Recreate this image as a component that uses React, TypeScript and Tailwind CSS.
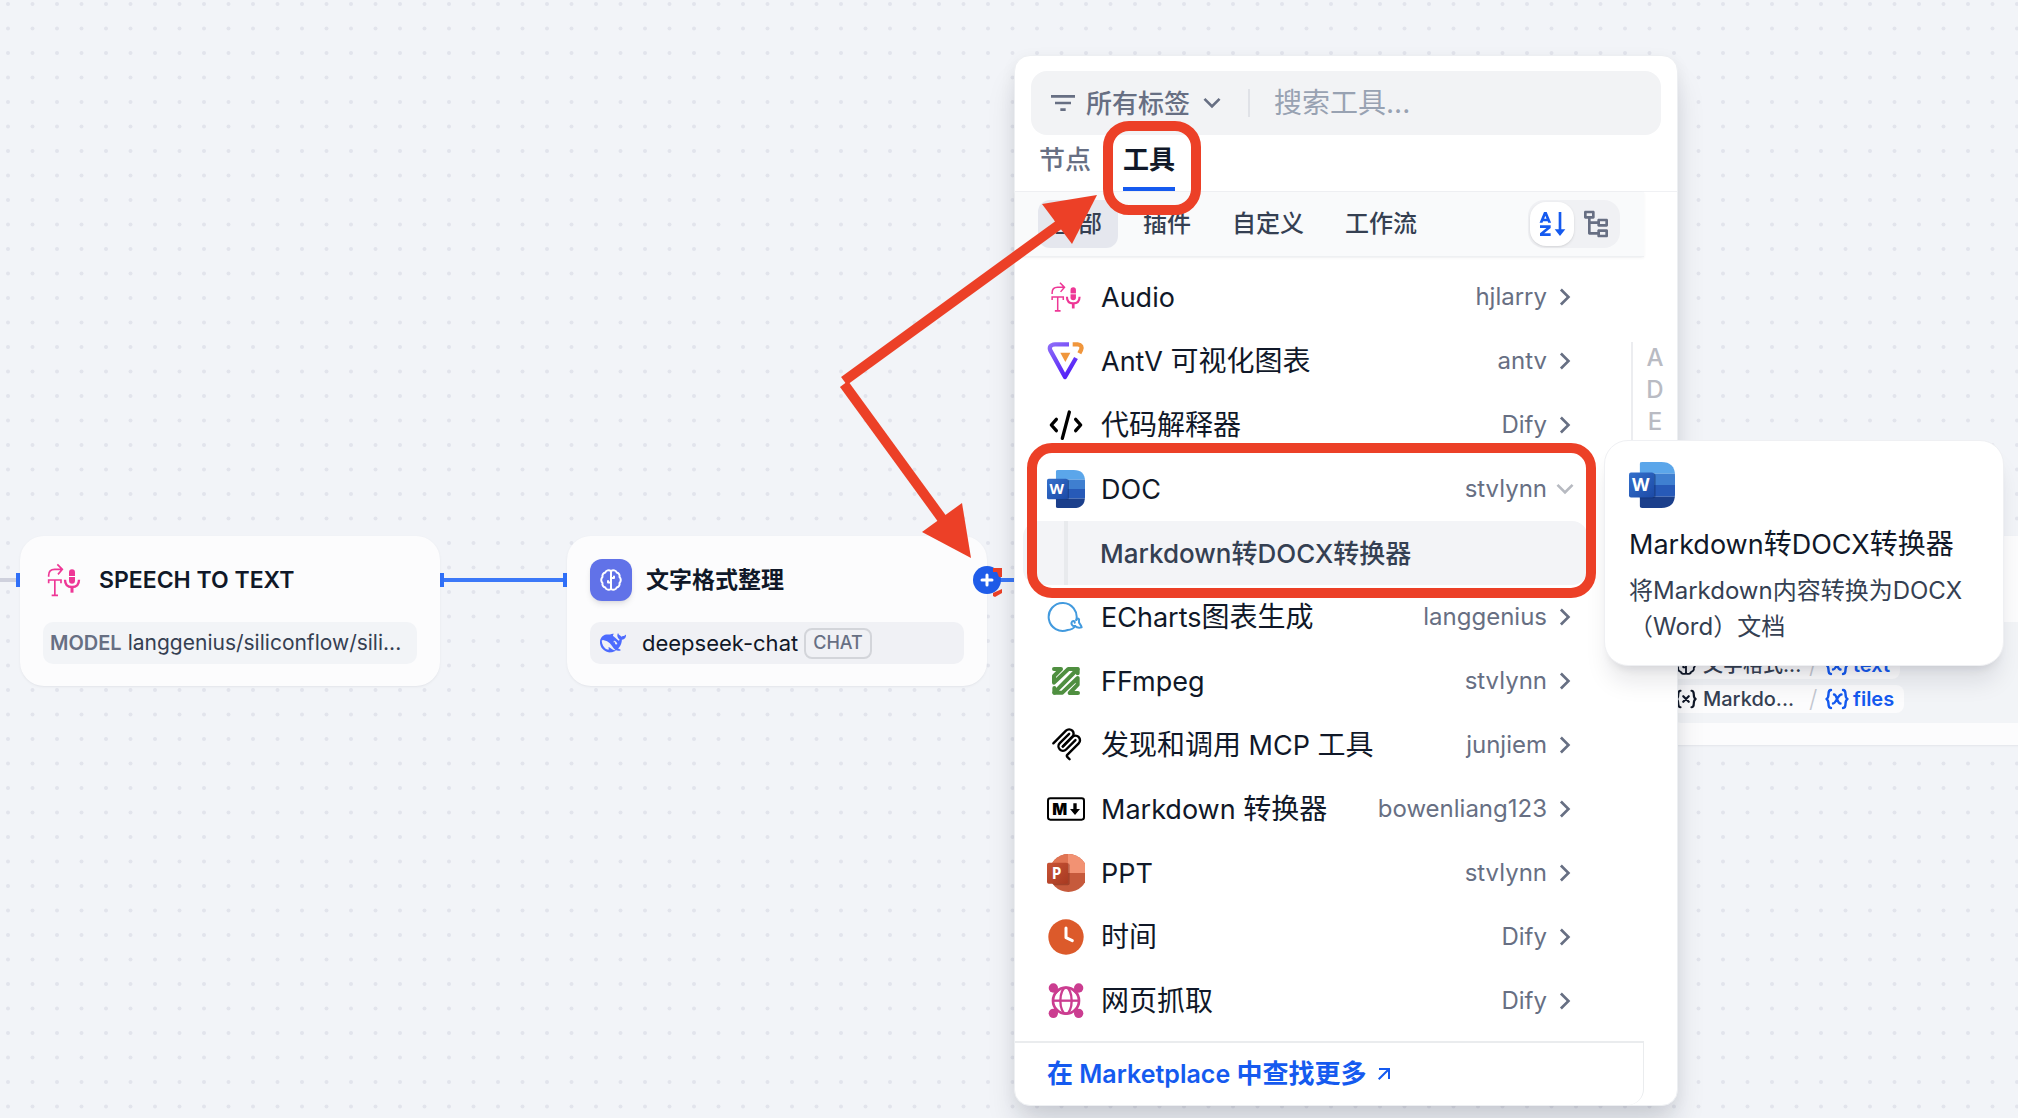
import type { ReactNode } from "react";
import {
  RiArrowDownSLine,
  RiArrowRightSLine,
  RiArrowRightUpLine,
  RiFilter3Line,
  RiNodeTree,
  RiSortAlphabetAsc,
} from "react-icons/ri";

/** Latin runs are set a little smaller than the Chinese text they sit in. */
function Mixed({ text, latin }: { text: string; latin: string }) {
  return (
    <>
      {text.split(/([\x20-\x7e]+)/).map((run, i) =>
        i % 2 ? (
          <span key={i} className={latin}>
            {run}
          </span>
        ) : (
          run
        ),
      )}
    </>
  );
}

function AudioIcon({ className }: { className: string }) {
  return (
    <svg viewBox="0 0 126 126" className={className} fill="none" stroke="#ee3796" strokeWidth="5" aria-hidden="true">
      <path d="M17 53V49C17 38 24 31 35 31H57M43 16L58 31L45 46" />
      <path d="M17 73V63H54V73M35.5 63V109M26 109H45" />
      <rect x="78" y="31" width="18" height="43" rx="9" fill="#ee3796" stroke="none" />
      <path d="M76 52.5H98" stroke="#fff" strokeWidth="3" />
      <path d="M66 62C66 78 74 84 87 84C100 84 108 78 108 62" strokeWidth="7" />
      <path d="M87 84V101" strokeWidth="9" />
    </svg>
  );
}

function AntvIcon() {
  return (
    <svg viewBox="0 0 114 114" className="size-full" fill="none" strokeLinejoin="round" aria-hidden="true">
      <defs>
        <linearGradient id="antv-purple" x1="0" y1="0" x2="0.6" y2="1">
          <stop offset="0" stopColor="#8d6bf8" />
          <stop offset="1" stopColor="#5522f7" />
        </linearGradient>
      </defs>
      <path d="M66 7H24C10 8 6 16 10 25L54 105L87 48" stroke="url(#antv-purple)" strokeWidth="13" />
      <path d="M77 7H92C103 8 106 15 102 24L97 34" stroke="#f0963c" strokeWidth="13" />
      <path d="M40 32H70L55 60Z" fill="#f0963c" />
    </svg>
  );
}

function CodeIcon() {
  return (
    <svg viewBox="0 0 114 114" className="size-full" fill="none" stroke="#000" strokeWidth="10" strokeLinecap="round" strokeLinejoin="round" aria-hidden="true">
      <path d="M28 40L13 57L28 74M86 40L101 57L86 74M67 18L46 97" />
    </svg>
  );
}

function WordIcon() {
  return (
    <svg viewBox="0 0 114 114" className="size-full" aria-hidden="true">
      <defs>
        <clipPath id="word-page">
          <path d="M32 0H80Q114 0 114 34V80Q114 114 80 114H32Q26 114 26 108V6Q26 0 32 0Z" />
        </clipPath>
        <linearGradient id="word-tile" x1="0" y1="0" x2="1" y2="1">
          <stop offset="0" stopColor="#3470cc" />
          <stop offset="1" stopColor="#1c4aa6" />
        </linearGradient>
      </defs>
      <g clipPath="url(#word-page)">
        <rect x="26" width="88" height="29" fill="#5ba6ea" />
        <rect x="26" y="29" width="88" height="28" fill="#3f7fd0" />
        <rect x="26" y="57" width="88" height="29" fill="#275ab8" />
        <rect x="26" y="86" width="88" height="28" fill="#1b3f8b" />
        <rect x="20" y="28" width="46" height="62" rx="6" fill="#0b2a66" fillOpacity="0.45" />
      </g>
      <rect y="26" width="62" height="62" rx="5" fill="url(#word-tile)" />
      <text x="29" y="73" textAnchor="middle" fontFamily="Open Sans" fontWeight="700" fontSize="45" fill="#fff">W</text>
    </svg>
  );
}

function EchartsIcon() {
  return (
    <svg viewBox="0 0 114 114" className="size-full" fill="none" stroke="#429ade" strokeWidth="6" strokeLinecap="round" strokeLinejoin="round" aria-hidden="true">
      <path d="M88 66A42 42 0 1 0 62 96C72 96 82 90 84 84C76 86 70 76 76 70C80 67 84 70 83 74" />
      <path d="M88 66C92 58 98 62 96 68C94 76 101 78 104 88C97 90 90 90 84 84" />
    </svg>
  );
}

function FfmpegIcon() {
  return (
    <svg viewBox="0 0 114 114" className="size-full" fill="none" stroke="#4f8f40" strokeWidth="12" strokeLinejoin="round" strokeLinecap="round" aria-hidden="true">
      <path d="M21 21H42L21 42V62L64 21H92L22 92H46L92 48V68L68 93H93" />
      <path d="M92 22V34M22 78V92" />
    </svg>
  );
}

function McpIcon() {
  return (
    <svg viewBox="-16 -8 204 204" className="size-full" fill="none" stroke="#000" strokeWidth="13" strokeLinecap="round" aria-hidden="true">
      <path d="M18 84.8528L85.8822 16.9706C95.2548 7.59798 110.451 7.59798 119.823 16.9706C129.196 26.3431 129.196 41.5391 119.823 50.9117L68.5581 102.177" />
      <path d="M69.2652 101.47L119.823 50.9117C129.196 41.5391 144.392 41.5391 153.765 50.9117L154.118 51.2652C163.491 60.6378 163.491 75.8338 154.118 85.2063L92.7248 146.6C89.6006 149.724 89.6006 154.789 92.7248 157.913L105.331 170.52" />
      <path d="M102.853 33.9411L52.6482 84.1457C43.2756 93.5183 43.2756 108.714 52.6482 118.087C62.0208 127.459 77.2167 127.459 86.5893 118.087L136.794 67.8822" />
    </svg>
  );
}

function MarkdownIcon() {
  return (
    <svg viewBox="0 0 114 114" className="size-full" aria-hidden="true">
      <rect x="3" y="25" width="108" height="64" rx="7" fill="none" stroke="#000" strokeWidth="6" />
      <text x="38" y="74" textAnchor="middle" fontFamily="Inter" fontWeight="900" fontSize="47" fill="#000">M</text>
      <path d="M79 40H89V57H99L84 75L69 57H79Z" />
    </svg>
  );
}

function PptIcon() {
  return (
    <svg viewBox="0 0 114 114" className="size-full" aria-hidden="true">
      <defs>
        <clipPath id="ppt-disc">
          <circle cx="64" cy="57" r="57" />
        </clipPath>
        <linearGradient id="ppt-tile" x1="0" y1="0" x2="1" y2="1">
          <stop offset="0" stopColor="#c85336" />
          <stop offset="1" stopColor="#a83a21" />
        </linearGradient>
      </defs>
      <g clipPath="url(#ppt-disc)">
        <rect width="114" height="114" fill="#c65a3c" />
        <rect width="63" height="57" fill="#e07453" />
        <rect x="63" width="51" height="57" fill="#f29273" />
        <rect x="4" y="28" width="64" height="66" rx="6" fill="#6b1f0e" fillOpacity="0.4" />
      </g>
      <rect y="26" width="63" height="63" rx="5" fill="url(#ppt-tile)" />
      <text x="29" y="74" textAnchor="middle" fontFamily="Open Sans" fontWeight="700" fontSize="46" fill="#fff">P</text>
    </svg>
  );
}

function ClockIcon() {
  return (
    <svg viewBox="0 0 114 114" className="size-full" fill="none" aria-hidden="true">
      <circle cx="57" cy="57" r="53" fill="#dc5a2b" />
      <path d="M57 30V59L76 68" stroke="#fff" strokeWidth="9" strokeLinecap="round" strokeLinejoin="round" />
    </svg>
  );
}

function WebIcon() {
  return (
    <svg viewBox="0 0 114 114" className="size-full" fill="none" stroke="#cb3d90" strokeWidth="8" aria-hidden="true">
      <circle cx="57" cy="56" r="39" />
      <ellipse cx="57" cy="56" rx="17" ry="39" strokeWidth="7" />
      <path d="M18 56H96" strokeWidth="7" />
      <path d="M20 19L32 31M94 19L82 31M20 93L32 81M94 93L82 81" strokeWidth="14" />
      <g fill="#cb3d90" stroke="none">
        <circle cx="19" cy="18" r="14" />
        <circle cx="95" cy="18" r="14" />
        <circle cx="19" cy="94" r="14" />
        <circle cx="95" cy="94" r="14" />
      </g>
    </svg>
  );
}

function BrainIcon({ className }: { className: string }) {
  return (
    <svg viewBox="0 0 24 24" className={className} fill="none" stroke="currentColor" strokeWidth="2" strokeLinecap="round" strokeLinejoin="round" aria-hidden="true">
      <path d="M12 3C10 1.6 7 2.2 6.3 4.5C4 5 3 7 3.5 9C1.8 10.5 1.8 13.5 3.5 15C3 17 4 19 6.3 19.5C7 21.8 10 22.4 12 21" />
      <path d="M12 3C14 1.6 17 2.2 17.7 4.5C20 5 21 7 20.5 9C22.2 10.5 22.2 13.5 20.5 15C21 17 20 19 17.7 19.5C17 21.8 14 22.4 12 21" />
      <path d="M12 3V21M12 14.5H9V13M12 10H15V8.5" />
    </svg>
  );
}

function DeepseekIcon() {
  return (
    <svg viewBox="0 0 24 24" className="h-7 w-[26px]" fill="#4d6bfe" aria-hidden="true">
      <path d="M23.748 4.482c-.254-.124-.364.113-.512.234-.051.039-.094.09-.137.136-.372.397-.806.657-1.373.626-.829-.046-1.537.214-2.163.848-.133-.782-.575-1.248-1.247-1.548-.352-.156-.708-.311-.955-.65-.172-.241-.219-.51-.305-.774-.055-.16-.11-.323-.293-.35-.2-.031-.278.136-.356.276-.313.572-.434 1.202-.422 1.84.027 1.436.633 2.58 1.838 3.393.137.093.172.187.129.323-.082.28-.18.552-.266.833-.055.179-.137.217-.329.14a5.526 5.526 0 01-1.736-1.18c-.857-.828-1.631-1.742-2.597-2.458a11.365 11.365 0 00-.689-.471c-.985-.957.13-1.743.388-1.836.27-.098.093-.432-.779-.428-.872.004-1.67.295-2.687.684a3.055 3.055 0 01-.465.137 9.597 9.597 0 00-2.883-.102c-1.885.21-3.39 1.102-4.497 2.623C.082 8.606-.231 10.684.152 12.85c.403 2.284 1.569 4.175 3.36 5.653 1.858 1.533 3.997 2.284 6.438 2.14 1.482-.085 3.133-.284 4.994-1.86.47.234.962.327 1.78.397.63.059 1.236-.03 1.705-.128.735-.156.684-.837.419-.961-2.155-1.004-1.682-.595-2.113-.926 1.096-1.296 2.746-2.642 3.392-7.003.05-.347.007-.565 0-.845-.004-.17.035-.237.23-.256a4.173 4.173 0 001.545-.475c1.396-.763 1.96-2.015 2.093-3.517.02-.23-.004-.467-.247-.588zM11.581 18c-2.089-1.642-3.102-2.183-3.52-2.16-.392.024-.321.471-.235.763.09.288.207.486.371.739.114.167.192.416-.113.603-.673.416-1.842-.14-1.897-.167-1.361-.802-2.5-1.86-3.301-3.307-.774-1.393-1.224-2.887-1.298-4.482-.02-.386.093-.522.477-.592a4.696 4.696 0 011.529-.039c2.132.312 3.946 1.265 5.468 2.774.868.86 1.525 1.887 2.202 2.891.72 1.066 1.494 2.082 2.48 2.914.348.292.625.514.891.677-.802.09-2.14.11-3.054-.614zm1-6.44a.306.306 0 01.415-.287.302.302 0 01.2.288.306.306 0 01-.31.307.303.303 0 01-.304-.308zm3.11 1.596c-.2.081-.399.151-.59.16a1.245 1.245 0 01-.798-.254c-.274-.23-.47-.358-.552-.758a1.73 1.73 0 01.016-.588c.07-.327-.008-.537-.239-.727-.187-.156-.426-.199-.688-.199a.559.559 0 01-.254-.078c-.11-.054-.2-.19-.114-.358.028-.054.16-.186.192-.21.356-.202.767-.136 1.146.016.352.144.618.408 1.001.782.391.451.462.576.685.914.176.265.336.537.445.848.067.195-.019.354-.25.452z" />
    </svg>
  );
}

function VariableIcon({ className, italic }: { className: string; italic?: boolean }) {
  return (
    <svg viewBox="0 0 24 24" className={className} fill="none" stroke="currentColor" strokeWidth="2.4" strokeLinecap="round" strokeLinejoin="round" aria-hidden="true">
      <path d="M6 3C3.5 3 3.5 5 3.5 7C3.5 9.5 3.2 11 1.5 12C3.2 13 3.5 14.5 3.5 17C3.5 19 3.5 21 6 21" />
      <path d="M18 3C20.5 3 20.5 5 20.5 7C20.5 9.5 20.8 11 22.5 12C20.8 13 20.5 14.5 20.5 17C20.5 19 20.5 21 18 21" />
      <path d={italic ? "M8 16.5C11 16.5 13 7.5 16.5 7.5M9 7.5C12 7.5 12 16.5 15.5 16.5" : "M9 9L15 15M15 9L9 15"} />
    </svg>
  );
}

/** Dot grid and the edges that join the nodes. */
function CanvasBackdrop() {
  return (
    <svg className="absolute inset-0 size-full" aria-hidden="true">
      <defs>
        <pattern id="dots" width="49" height="49" patternUnits="userSpaceOnUse">
          <g fill="#e2e4ec">
            <circle cx="8" cy="4" r="2" />
            <circle cx="32.5" cy="4" r="2" />
            <circle cx="8" cy="28.5" r="2" />
            <circle cx="32.5" cy="28.5" r="2" />
          </g>
        </pattern>
      </defs>
      <rect width="100%" height="100%" fill="url(#dots)" />
      <path d="M0 580H17" stroke="#cfd1dd" strokeWidth="4" />
      <path d="M443 580H564M987 580H1020" stroke="#3b78f8" strokeWidth="4" />
      <g fill="#2f6ff8">
        <rect x="16" y="573" width="4" height="14" />
        <rect x="440" y="573" width="4" height="14" />
        <rect x="563" y="573" width="4" height="14" />
      </g>
    </svg>
  );
}

/** Red arrows laid over the page. */
function Arrows() {
  return (
    <svg className="pointer-events-none absolute inset-0 z-40 size-full" fill="#ec4027" aria-hidden="true">
      <path d="M844 381L1060 224" stroke="#ec4027" strokeWidth="10" />
      <path d="M1097 195L1042 204L1072 244Z" />
      <path d="M844 384L943 520" stroke="#ec4027" strokeWidth="10" />
      <path d="M971 558L962 503L922 532Z" />
    </svg>
  );
}

function NodeCard({ place, children }: { place: string; children: ReactNode }) {
  return (
    <article className={"absolute w-[420px] rounded-3xl bg-[#fcfcfd] px-[23px] pt-[23px] pb-[22px] shadow-sm shadow-gray-900/5 " + place}>
      {children}
    </article>
  );
}

function NodeHeader({ icon, title }: { icon: ReactNode; title: string }) {
  return (
    <header className="mb-[21px] flex h-[42px] items-center gap-3.5">
      {icon}
      <h2 className="text-[23px] font-semibold text-[#101828]">{title}</h2>
    </header>
  );
}

function OutputChip({ icon, node, name }: { icon: ReactNode; node: string; name: string }) {
  return (
    <li className="flex h-7 w-fit items-center rounded-lg bg-[#fcfcfd] pr-2.5 pl-1 text-xl text-[#354052]">
      <span className="mr-1.5 text-[#101828]">{icon}</span>
      <span className="w-[106px] font-medium">{node}</span>
      <span className="w-4 text-2xl font-light text-[#c3c7d0]">/</span>
      <span className="flex items-center gap-1 font-semibold text-[#155aef]">
        <VariableIcon className="size-6" italic />
        {name}
      </span>
    </li>
  );
}

type Tool = { name: string; author: string; icon: ReactNode; open?: boolean };

const tools: Tool[] = [
  { name: "Audio", author: "hjlarry", icon: <AudioIcon className="size-full" /> },
  { name: "AntV 可视化图表", author: "antv", icon: <AntvIcon /> },
  { name: "代码解释器", author: "Dify", icon: <CodeIcon /> },
  { name: "DOC", author: "stvlynn", icon: <WordIcon />, open: true },
  { name: "ECharts图表生成", author: "langgenius", icon: <EchartsIcon /> },
  { name: "FFmpeg", author: "stvlynn", icon: <FfmpegIcon /> },
  { name: "发现和调用 MCP 工具", author: "junjiem", icon: <McpIcon /> },
  { name: "Markdown 转换器", author: "bowenliang123", icon: <MarkdownIcon /> },
  { name: "PPT", author: "stvlynn", icon: <PptIcon /> },
  { name: "时间", author: "Dify", icon: <ClockIcon /> },
  { name: "网页抓取", author: "Dify", icon: <WebIcon /> },
];

function ToolRow({ tool }: { tool: Tool }) {
  return (
    <li>
      <button type="button" aria-expanded={!!tool.open} className="flex h-16 w-full items-center pr-[7px] pl-6 text-left">
        <span className="mr-4 size-[38px] shrink-0">{tool.icon}</span>
        <span className="flex-1 text-[28px] leading-9 text-[#101828]">
          <Mixed text={tool.name} latin="text-[27px]" />
        </span>
        <span className="mr-0.5 text-2xl text-[#676f83]">{tool.author}</span>
        {tool.open ? (
          <RiArrowDownSLine className="size-8 text-[#b7bac1]" />
        ) : (
          <RiArrowRightSLine className="size-8 text-[#676f83]" />
        )}
      </button>
      {tool.open && (
        <button type="button" className="flex h-16 w-full items-center rounded-2xl bg-[#f3f4f7] pl-[41px] text-left">
          <span className="mr-8 h-full w-1 bg-[#e8eaed]" />
          <span className="text-[26px] font-medium text-[#354052]">Markdown转DOCX转换器</span>
        </button>
      )}
    </li>
  );
}

function ToolPicker() {
  return (
    <section
      aria-label="工具"
      className="absolute top-[55px] left-[1014px] z-10 w-[664px] rounded-2xl border border-[#edeff2] bg-white shadow-[0_24px_32px_-4px_rgba(16,24,40,0.14),0_4px_16px_rgba(16,24,40,0.06)]"
    >
      <div className="mx-4 mt-[15px] flex h-16 items-center rounded-2xl bg-[#f2f3f5] pl-4">
        <button type="button" className="flex items-center text-[26px] font-medium text-[#676f83]">
          <RiFilter3Line className="mr-[7px] size-8" />
          所有标签
          <RiArrowDownSLine className="ml-1.5 size-8" />
        </button>
        <span className="mr-6 ml-5 h-7 w-0.5 bg-[#e0e2e7]" />
        <input
          type="search"
          aria-label="搜索工具"
          placeholder="搜索工具..."
          className="min-w-0 flex-1 bg-transparent text-[28px] text-[#101828] outline-none placeholder:text-[#98a2b2]"
        />
      </div>

      <div role="tablist" className="flex h-[57px] gap-8 border-b border-[#f0f1f4] px-6 text-[26px] leading-9">
        <button type="button" role="tab" aria-selected="false" className="flex items-start pt-[7px] font-medium text-[#676f83]">
          节点
        </button>
        <button type="button" role="tab" aria-selected="true" className="flex items-start border-b-4 border-[#155aef] pt-[7px] font-semibold text-[#101828]">
          工具
        </button>
      </div>

      <div className="mr-[33px] flex h-[65px] items-center justify-between border-b border-[#eef0f2] bg-[#f9fafb] pr-6 pl-[23px] shadow-sm shadow-gray-900/5">
        <div className="flex gap-[9px] text-2xl font-medium text-[#354052]">
          <button type="button" className="h-12 rounded-xl bg-[#e5e7ee] px-4">全部</button>
          <button type="button" className="h-12 rounded-xl px-4">插件</button>
          <button type="button" className="h-12 rounded-xl px-4">自定义</button>
          <button type="button" className="h-12 rounded-xl px-4">工作流</button>
        </div>
        <div className="flex h-12 items-center rounded-2xl bg-[#f0f1f4] p-0.5">
          <button type="button" aria-label="按字母排序" className="flex size-11 items-center justify-center rounded-2xl bg-white text-[#155aef] shadow-sm">
            <RiSortAlphabetAsc className="size-8" />
          </button>
          <button type="button" aria-label="树状视图" className="flex size-11 items-center justify-center text-[#676f83]">
            <RiNodeTree className="size-8" />
          </button>
        </div>
      </div>

      <div className="flex items-start">
        <ul className="flex-1 py-2 pr-[43px] pl-2">
          {tools.map((tool) => (
            <ToolRow key={tool.name} tool={tool} />
          ))}
        </ul>
        <nav aria-label="索引" className="mt-[85px] flex w-[46px] flex-col border-l-2 border-[#ecedf0] pb-8 text-center text-2xl text-[#b9bbc3]">
          {["A", "D", "E"].map((letter) => (
            <button key={letter} type="button" className="h-8 font-medium">
              {letter}
            </button>
          ))}
        </nav>
      </div>

      <footer className="mr-[33px] h-16 rounded-br-2xl border-t-2 border-r border-[#eaecee] pl-8">
        <a href="#marketplace" className="flex h-full w-fit items-center text-[26px] font-semibold text-[#155aef]">
          <span>
            <Mixed text="在 Marketplace 中查找更多" latin="text-[25px]" />
          </span>
          <RiArrowRightUpLine className="ml-1.5 size-6" />
        </a>
      </footer>
    </section>
  );
}

function ToolTip() {
  return (
    <aside
      role="tooltip"
      className="absolute top-[440px] left-[1604px] z-20 w-[400px] rounded-3xl border border-[#eff0f3] bg-white px-6 pt-[21px] pb-5 shadow-xl shadow-gray-900/10"
    >
      <div className="size-[46px]">
        <WordIcon />
      </div>
      <h3 className="mt-4 text-[28px] leading-10 text-[#101828]">
        <Mixed text="Markdown转DOCX转换器" latin="text-[27px]" />
      </h3>
      <p className="mt-2 text-2xl leading-9 text-[#354052]">将Markdown内容转换为DOCX（Word）文档</p>
    </aside>
  );
}

export default function App() {
  return (
    <main className="relative min-h-screen w-full overflow-hidden bg-[#f2f4f8] font-['Inter','Noto_Sans_CJK_SC',sans-serif] antialiased">
      <CanvasBackdrop />

      <NodeCard place="top-[536px] left-5">
        <NodeHeader title="SPEECH TO TEXT" icon={<AudioIcon className="size-[42px]" />} />
        <div className="flex h-[42px] items-center gap-1.5 rounded-[10px] bg-[#f2f4f7] px-[7px]">
          <span className="text-xl font-semibold text-[#676f83]">MODEL</span>
          <span className="text-[21px] text-[#354052]">langgenius/siliconflow/sili...</span>
        </div>
      </NodeCard>

      <NodeCard place="top-[536px] left-[567px]">
        <NodeHeader
          title="文字格式整理"
          icon={
            <span className="flex size-[42px] items-center justify-center rounded-xl bg-[#6172e8] text-white shadow-md shadow-gray-900/10">
              <BrainIcon className="size-6" />
            </span>
          }
        />
        <div className="flex h-[42px] items-center rounded-[10px] bg-[#f0f1f5] px-2.5">
          <DeepseekIcon />
          <span className="ml-4 text-[22px] text-[#101828]">deepseek-chat</span>
          <span className="ml-1.5 flex h-[31px] items-center rounded-lg border-2 border-[#d3d5da] px-[7px] text-lg leading-6 font-medium text-[#676f83]">CHAT</span>
        </div>
      </NodeCard>

      <button type="button" aria-label="添加节点" className="absolute top-[566px] left-[973px] flex size-7 items-center justify-center rounded-full bg-[#1f5ce9] text-white">
        <svg viewBox="0 0 28 28" className="size-7" fill="none" aria-hidden="true">
          <path d="M14 9V19M9 14H19" stroke="#fff" strokeWidth="3" strokeLinecap="round" />
        </svg>
      </button>
      <svg viewBox="0 0 10 30" className="absolute top-[568px] left-[993px] h-[30px] w-2.5" fill="#ec4027" aria-hidden="true">
        <path d="M0 0H9V9H6L4 4H0ZM0 25L9 21V25L2 29L0 28Z" />
      </svg>

      <NodeCard place="top-[536px] left-[1648px]">
        <ul className="mt-[63px] flex h-[101px] flex-col justify-end gap-1.5 rounded-[10px] bg-[#f2f4f7] pb-2.5">
          <OutputChip icon={<BrainIcon className="size-[22px]" />} node="文字格式..." name="text" />
          <OutputChip icon={<VariableIcon className="size-[22px]" />} node="Markdo..." name="files" />
        </ul>
      </NodeCard>

      <ToolPicker />
      <ToolTip />

      <div className="pointer-events-none absolute top-[121px] left-[1103px] z-30 h-[94px] w-[98px] rounded-[26px] border-10 border-[#ec4027]" />
      <div className="pointer-events-none absolute top-[443px] left-[1027px] z-30 h-[155px] w-[569px] rounded-[25px] border-10 border-[#ec4027]" />
      <Arrows />
    </main>
  );
}
